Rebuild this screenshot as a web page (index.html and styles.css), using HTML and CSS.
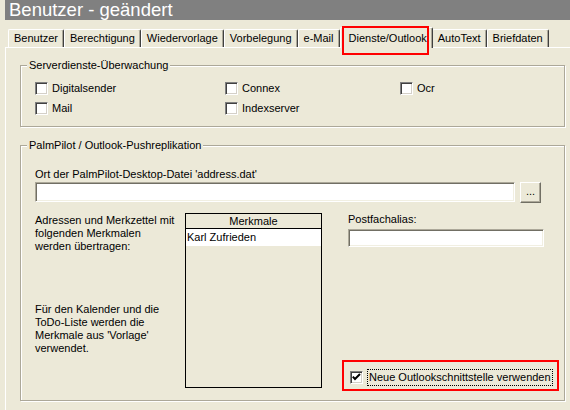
FILE: index.html
```html
<!DOCTYPE html>
<html lang="de">
<head>
<meta charset="utf-8">
<title>Benutzer - geändert</title>
<link rel="stylesheet" href="styles.css">
</head>
<body>
<div class="window">
  <div class="titlebar">Benutzer - geändert</div>
  <div class="tabs">
    <div class="tab">Benutzer</div>
    <div class="tab">Berechtigung</div>
    <div class="tab">Wiedervorlage</div>
    <div class="tab">Vorbelegung</div>
    <div class="tab">e-Mail</div>
    <div class="tab tab-active">Dienste/Outlook</div>
    <div class="tab">AutoText</div>
    <div class="tab">Briefdaten</div>
  </div>
  <div class="panel">
    <fieldset class="group">
      <legend>Serverdienste-Überwachung</legend>
      <div class="check-grid">
        <label class="check"><span class="box"></span>Digitalsender</label>
        <label class="check"><span class="box"></span>Connex</label>
        <label class="check"><span class="box"></span>Ocr</label>
        <label class="check"><span class="box"></span>Mail</label>
        <label class="check"><span class="box"></span>Indexserver</label>
      </div>
    </fieldset>
    <fieldset class="group group-palm">
      <legend>PalmPilot / Outlook-Pushreplikation</legend>
      <div class="palm-body">
        <div class="field-label">Ort der PalmPilot-Desktop-Datei 'address.dat'</div>
        <div class="path-row">
          <div class="textbox path"></div>
          <div class="button">...</div>
        </div>
        <div class="lower">
          <div class="notes">
            <p class="note note1">Adressen und Merkzettel mit<br>folgenden Merkmalen<br>werden übertragen:</p>
            <p class="note note2">Für den Kalender und die<br>ToDo-Liste werden die<br>Merkmale aus 'Vorlage'<br>verwendet.</p>
          </div>
          <div class="list">
            <div class="list-head">Merkmale</div>
            <div class="list-row">Karl Zufrieden</div>
          </div>
          <div class="side">
            <div class="field-label">Postfachalias:</div>
            <div class="textbox alias"></div>
            <div class="highlight">
              <span class="box checked"><svg width="11" height="11" viewBox="0 0 11 11"><path d="M1.8 4.6 L4 7 L9 2" fill="none" stroke="#000" stroke-width="2"/></svg></span>
              <span class="focus">Neue Outlookschnittstelle verwenden</span>
            </div>
          </div>
        </div>
      </div>
    </fieldset>
  </div>
</div>
</body>
</html>
```
FILE: styles.css
```css
* { box-sizing: border-box; }
html, body { margin: 0; padding: 0; }
body {
  width: 570px;
  height: 410px;
  overflow: hidden;
  background: #ece9d8;
  font-family: "Liberation Sans", Arial, sans-serif;
  font-size: 11px;
  line-height: 13px;
  color: #000;
}
.titlebar {
  margin-left: 5px;
  height: 20px;
  background: #808080;
  color: #fff;
  font-size: 18.5px;
  line-height: 20px;
  padding-left: 4px;
  white-space: nowrap;
}
.tabs {
  display: flex;
  align-items: flex-end;
  height: 27px;
  padding-left: 8px;
}
.tab {
  height: 18px;
  padding: 0 5px;
  border-top: 1px solid #fff;
  border-left: 1px solid #fff;
  border-right: 1px solid #404040;
  box-shadow: inset -1px 0 0 #aca899;
  border-radius: 2px 2px 0 0;
  line-height: 17px;
  white-space: nowrap;
}
.tab-active {
  position: relative;
  z-index: 1;
  height: 21px;
  margin: 0 -1px -1px 0;
  padding: 2px 5px 0 8px;
  background: #ece9d8;
}
.tab-active::after {
  content: "";
  position: absolute;
  left: 1px;
  right: 3px;
  top: -2px;
  height: 25px;
  border: 2px solid #f00;
}
.panel {
  border-top: 1px solid #fff;
  border-left: 1px solid #fff;
  margin-left: 5px;
  height: 363px;
  padding: 11px 5px 0 14px;
}
.group {
  margin: 0;
  padding: 0;
  min-width: 0;
  border: 1px solid #aca899;
  box-shadow: inset 1px 1px 0 #fff, 1px 1px 0 #fff;
}
.group legend {
  margin-left: 6px;
  padding: 0 2px;
  line-height: 13px;
  background: #ece9d8;
}
.check-grid {
  display: grid;
  grid-template-columns: 190px 175px 1fr;
  grid-auto-rows: 20px;
  padding: 6px 14px 8px;
}
.check {
  display: flex;
  align-items: center;
  gap: 4px;
}
.box {
  flex: none;
  display: flex;
  align-items: center;
  justify-content: center;
  width: 13px;
  height: 13px;
  background: #fff;
  border: 1px solid;
  border-color: #808080 #fff #fff #808080;
  box-shadow: inset 1px 1px 0 #404040, inset -1px -1px 0 #d4d0c8;
}
.group-palm { margin-top: 12px; }
.palm-body { padding: 16px 14px 9px; }
.path-row {
  display: flex;
  gap: 5px;
  margin-top: 1px;
}
.textbox {
  background: #fff;
  border: 1px solid;
  border-color: #aca899 #fff #fff #aca899;
  box-shadow: inset 1px 1px 0 #716f64, inset -1px -1px 0 #f1efe2;
}
.path { width: 480px; height: 20px; }
.button {
  width: 21px;
  height: 21px;
  border: 1px solid;
  border-color: #fff #716f64 #716f64 #fff;
  box-shadow: inset -1px -1px 0 #aca899;
  text-align: center;
  line-height: 17px;
}
.lower {
  display: flex;
  align-items: flex-start;
  margin-top: 10px;
}
.notes { width: 150px; flex: none; }
.note { margin: 0; }
.note1 { padding-top: 1px; }
.note2 { margin-top: 50px; }
.list {
  flex: none;
  width: 137px;
  height: 175px;
  border: 1px solid #000;
}
.list-head {
  height: 15px;
  border-bottom: 1px solid #000;
  text-align: center;
  line-height: 14px;
}
.list-row {
  background: #fff;
  padding: 2px 1px 2px;
}
.side {
  margin-left: 26px;
  flex: none;
  width: 201px;
}
.alias {
  width: 196px;
  height: 18px;
  margin-top: 3px;
}
.highlight {
  display: flex;
  align-items: center;
  gap: 4px;
  width: max-content;
  margin: 113px 0 0 -6px;
  padding: 7px 4px 3px 6px;
  border: 2px solid #f00;
}
.focus {
  border: 1px dotted #000;
  padding: 1px;
  white-space: nowrap;
}
```
